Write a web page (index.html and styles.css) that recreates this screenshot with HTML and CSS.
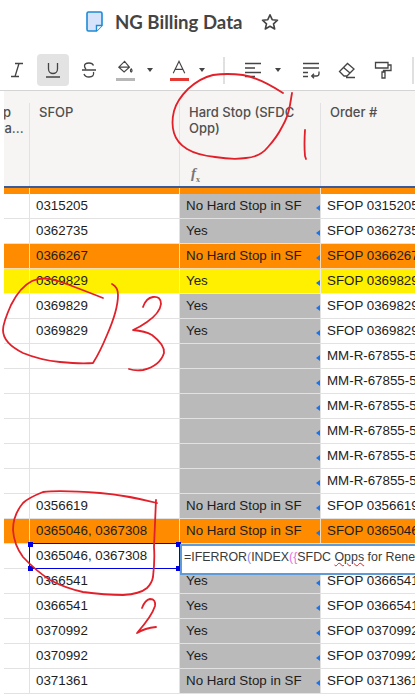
FILE: index.html
```html
<!DOCTYPE html>
<html lang="en">
<head>
  <meta charset="UTF-8" />
  <meta name="viewport" content="width=device-width, initial-scale=1.0">
  <title>NG Billing Data</title>
  <link rel="stylesheet" href="styles.css">
</head>
<body>

  <div class="titlebar">
    <svg class="doc-icon" width="17" height="21" viewBox="0 0 17 21">
      <path d="M1 2.5 a1.5 1.5 0 0 1 1.5-1.5 H14.5 a1.5 1.5 0 0 1 1.5 1.5 V14.5 L10.5 20 H2.5 a1.5 1.5 0 0 1-1.5-1.5 Z" fill="#d6e3fa" stroke="#1c8ad6" stroke-width="1.6"/>
      <path d="M10.5 20 V14.5 H16" fill="#fff" stroke="#1c8ad6" stroke-width="1.4"/>
    </svg>
    <h1 class="title">NG Billing Data</h1>
    <svg class="star" width="18" height="18" viewBox="0 0 18 18">
      <path d="M9 1.8 L11.2 6.7 L16.5 7.2 L12.5 10.8 L13.7 16 L9 13.3 L4.3 16 L5.5 10.8 L1.5 7.2 L6.8 6.7 Z" fill="none" stroke="#444" stroke-width="1.6" stroke-linejoin="round"/>
    </svg>
  </div>

  <div class="toolbar">
    <span class="tool"><svg viewBox="0 0 18 18"><path d="M7 2.5 H15 M3 15.5 H11 M11 2.5 L7 15.5"/></svg></span>
    <span class="tool active"><svg viewBox="0 0 18 18"><path d="M4.5 2 V8 a4.5 4.5 0 0 0 9 0 V2 M2 16 H16"/></svg></span>
    <span class="tool"><svg viewBox="0 0 18 18"><path d="M13.5 4.5 Q12.5 2 9 2 Q4.5 2 4.5 5 Q4.5 6.8 6 8 M2 9 H16 M13.5 11 Q14.5 16 9 16 Q5 16 4 13"/></svg></span>
    <span class="tool color-tool">
      <svg viewBox="0 0 18 18"><path d="M8.5 1.5 L2 8 L8 13.5 L14 8 Z M2.5 8 H14 M16 10 Q17.8 12.2 16 13.6 Q14.2 12.2 16 10 Z"/></svg>
      <i class="swatch swatch-grey"></i>
    </span>
    <span class="caret"></span>
    <span class="tool color-tool text-color">
      <svg viewBox="0 0 18 18"><path d="M2.5 15 L9 1.5 L15.5 15 M5 10.5 H13"/></svg>
      <i class="swatch swatch-red"></i>
    </span>
    <span class="caret"></span>
    <span class="divider first-divider"></span>
    <span class="tool"><svg viewBox="0 0 18 18"><path d="M1 2.5 H17 M1 7 H11 M1 11.5 H17 M1 15.5 H11"/></svg></span>
    <span class="caret caret-tight"></span>
    <span class="tool wrap-tool"><svg viewBox="0 0 18 18"><path d="M1 2.5 H17 M1 7 H17 M1 11.5 H6 M1 15.5 H6 M17 10.5 V12.5 a2.5 2.5 0 0 1-2.5 2.5 H10 M12 12.8 L9.7 15 L12 17.2"/></svg></span>
    <span class="tool"><svg viewBox="0 0 18 18"><path d="M1.5 10.5 L9.5 2.5 L16 8 L9 15 H6 Z M5.5 6.5 L12 12 M8 16.5 H17"/></svg></span>
    <span class="tool"><svg viewBox="0 0 18 18"><path d="M1.5 1.5 H14 V7 H1.5 Z M14 4 H17 V9.5 H9.5 V11 M8 11 H11 V17 H8 Z"/></svg></span>
    <span class="divider"></span>
  </div>

  <div class="sheet">
    <div class="head-row">
      <div class="head-cell clipped"><span class="clip-p">Op</span><span class="clip-a">Da...</span></div>
      <div class="head-cell">SFOP</div>
      <div class="head-cell">Hard Stop (SFDC Opp)<span class="fx"><i>f</i><sub>x</sub></span></div>
      <div class="head-cell">Order #</div>
    </div>
    <div class="band"><span></span><span></span><span></span><span></span></div>

    <div class="row"><div></div><div>0315205</div><div class="hard">No Hard Stop in SF</div><div>SFOP 0315205</div></div>
    <div class="row"><div></div><div>0362735</div><div class="hard">Yes</div><div>SFOP 0362735</div></div>
    <div class="row orange"><div></div><div>0366267</div><div class="hard">No Hard Stop in SF</div><div>SFOP 0366267</div></div>
    <div class="row yellow"><div></div><div>0369829</div><div class="hard">Yes</div><div>SFOP 0369829</div></div>
    <div class="row"><div></div><div>0369829</div><div class="hard">Yes</div><div>SFOP 0369829</div></div>
    <div class="row"><div></div><div>0369829</div><div class="hard">Yes</div><div>SFOP 0369829</div></div>
    <div class="row"><div></div><div></div><div class="hard"></div><div>MM-R-67855-5</div></div>
    <div class="row"><div></div><div></div><div class="hard"></div><div>MM-R-67855-5</div></div>
    <div class="row"><div></div><div></div><div class="hard"></div><div>MM-R-67855-5</div></div>
    <div class="row"><div></div><div></div><div class="hard"></div><div>MM-R-67855-5</div></div>
    <div class="row"><div></div><div></div><div class="hard"></div><div>MM-R-67855-5</div></div>
    <div class="row"><div></div><div></div><div class="hard"></div><div>MM-R-67855-5</div></div>
    <div class="row"><div></div><div>0356619</div><div class="hard">No Hard Stop in SF</div><div>SFOP 0356619</div></div>
    <div class="row orange"><div></div><div>0365046, 0367308</div><div class="hard">No Hard Stop in SF</div><div>SFOP 0365046</div></div>
    <div class="row"><div></div><div class="selected">0365046, 0367308<i class="handle tl"></i><i class="handle tr"></i><i class="handle bl"></i><i class="handle br"></i></div><div class="hard"></div><div></div>
      <div class="editor">=IFERROR<span class="paren-blue">(</span>INDEX<span class="paren-pink">(</span><span class="paren-pink">{</span>SFDC <span class="typo">Opps</span> for Renewals</div>
    </div>
    <div class="row"><div></div><div>0366541</div><div class="hard">Yes</div><div>SFOP 0366541</div></div>
    <div class="row"><div></div><div>0366541</div><div class="hard">Yes</div><div>SFOP 0366541</div></div>
    <div class="row"><div></div><div>0370992</div><div class="hard">Yes</div><div>SFOP 0370992</div></div>
    <div class="row"><div></div><div>0370992</div><div class="hard">Yes</div><div>SFOP 0370992</div></div>
    <div class="row"><div></div><div>0371361</div><div class="hard">No Hard Stop in SF</div><div>SFOP 0371361</div></div>
  </div>

  <!-- red pen marks drawn over the screenshot -->
  <svg class="ink" width="415" height="695" viewBox="0 0 415 695">
    <path d="M283 93 Q260 78 243 75 Q227 73 213 75 Q200 78 188 89 Q177 100 174 111 Q171 123 174 133 Q177 143 187 149 Q197 155 215 157 Q233 160 246 158 Q260 157 268 147 Q277 137 282 127 Q288 117 290 105 L292 93"/>
    <path d="M305 130 Q304 145 305 156 L306 159"/>
    <path d="M103 298 Q70 285 58 281 Q43 276 32 281 Q20 287 11 305 Q3 323 3 330 Q3 343 23 353 Q40 360 60 362 Q80 364 93 363 Q100 352 107 335 Q118 310 118 295 Q118 287 112 284"/>
    <path d="M143 307 Q146 298 153 297 Q161 296 161 304 Q160 313 147 322 Q140 327 133 330 Q145 331 152 335 Q165 345 164 353 Q160 366 143 370 Q135 371 129 369"/>
    <path d="M157 503 Q125 495 100 493 Q60 490 43 492 Q28 498 23 503 Q13 515 13 530 Q14 545 23 557 Q35 570 50 580 Q65 588 83 592 Q105 595 123 595 Q140 594 147 588 Q152 583 153 577 Q155 560 154 547 L156 500"/>
    <path d="M142 608 Q145 600 150 599 Q156 599 155 606 Q152 616 137 633 Q145 628 156 627"/>
  </svg>

</body>
</html>
```

FILE: styles.css
```css
html, body {
  margin: 0;
  padding: 0;
  background: white;
  overflow: hidden;
  width: 415px;
  height: 695px;
  font-family: 'Liberation Sans', Arial, sans-serif;
  color: #1d1d1d;
}

body { position: relative; }

/* title row */
.titlebar {
  height: 43px;
  display: flex;
  align-items: center;
  padding-left: 86px;
  box-sizing: border-box;
}

.doc-icon { margin-right: 12px; }

.title {
  margin: 0 18px 0 0;
  font-family: Lato, sans-serif;
  font-size: 18.6px;
  font-weight: 700;
  color: #444;
}

/* toolbar */
.toolbar {
  height: 48px;
  display: flex;
  align-items: center;
  gap: 4px;
  padding-top: 7px;
  box-sizing: border-box;
  border-bottom: 1px solid #d4d4d4;
}

.tool {
  width: 32px;
  height: 32px;
  border-radius: 4px;
  display: flex;
  flex-direction: column;
  align-items: center;
  justify-content: center;
  flex: none;
}

.tool:first-child { margin-left: 1px; }
.tool.active { background: #e3e3e3; }

.tool svg {
  width: 18px;
  height: 18px;
  fill: none;
  stroke: #444;
  stroke-width: 1.3;
}

.color-tool { justify-content: flex-start; padding-top: 6px; box-sizing: border-box; }
.color-tool svg { width: 16px; height: 16px; }
.text-color { margin-right: -2px; }

.swatch { display: block; width: 19px; height: 3px; margin-top: 2px; }
.swatch-grey { background: #b7b7b7; }
.swatch-red { background: #e53935; }

.caret {
  width: 0;
  height: 0;
  border-left: 3px solid transparent;
  border-right: 3px solid transparent;
  border-top: 4px solid #444;
  flex: none;
}

.color-tool + .caret { margin: 0 6px 0 2px; }
.caret-tight { margin: 0 6px 0 2px; }

.divider {
  width: 2px;
  height: 27px;
  background: #e0e0e0;
  flex: none;
}

.first-divider { margin: 0 8px 0 8px; }
.wrap-tool { margin-left: 4px; }
.toolbar .divider:last-child { margin-left: 9px; }

/* sheet */
.sheet { padding-left: 4px; }

.head-row, .row, .band {
  display: grid;
  grid-template-columns: 26px 150px 141px 1fr;
}

.head-row {
  height: 95px;
  background: #f6f5f4;
  padding-top: 12px;
  box-sizing: border-box;
}

.head-cell {
  position: relative;
  padding: 1px 24px 0 9px;
  font-family: Inter, sans-serif;
  font-size: 13px;
  font-weight: 500;
  line-height: 16px;
  color: #4f4f4f;
  border-right: 1px solid #e2e2e2;
  overflow: hidden;
}

.head-cell:last-child { border-right: 0; }

.clipped { padding: 1px 0 0 0; }
.clip-p { display: block; margin-left: -11px; }
.clip-a { display: block; margin-left: -9px; }

.fx {
  display: block;
  margin-top: 30px;
  margin-left: 2px;
  font-family: 'Liberation Serif', serif;
  font-size: 15px;
  font-weight: 700;
  line-height: 14px;
  color: #777;
}

.fx sub { font-size: 8px; line-height: 0; }

.band {
  height: 8px;
  box-sizing: border-box;
  background: #ff8c00;
  border-top: 2px solid #3d5a98;
}

.band span { border-right: 1px solid #f6e6d0; }
.band span:last-child { border-right: 0; }

.row { height: 25px; position: relative; }

.row > div {
  border-right: 1px solid #e2e2e2;
  border-bottom: 1px solid #e2e2e2;
  font-size: 13.33px;
  line-height: 24px;
  padding-left: 6px;
  white-space: nowrap;
  overflow: hidden;
  box-sizing: border-box;
  color: #1d1d1d;
}

.row > div:first-child { padding: 0; }
.row > div:last-child { border-right: 0; }

.row > .hard {
  background: #bababa;
  position: relative;
  overflow: visible;
}

.hard::after {
  content: "";
  position: absolute;
  right: 0;
  top: 11px;
  border-top: 3px solid transparent;
  border-bottom: 3px solid transparent;
  border-right: 4px solid #1a73e8;
}

.row.orange > div { background: #ff8c00; border-color: #f6dcb8; }
.row.yellow > div { background: #fff000; border-color: #eee; }

/* selected cell and its formula popup */
.row > .selected {
  position: relative;
  overflow: visible;
  border: 1px solid #0000e0;
  margin: -1px 0 0 -1px;
  padding-left: 6px;
  height: 26px;
  line-height: 24px;
  z-index: 2;
}

.handle {
  position: absolute;
  width: 5px;
  height: 5px;
  background: #0000e0;
}

.handle.tl { left: -2px; top: -2px; }
.handle.tr { right: -2px; top: -2px; }
.handle.bl { left: -2px; bottom: -3px; }
.handle.br { right: -2px; bottom: -3px; }

.row > .editor {
  position: absolute;
  left: 176px;
  top: 0;
  width: 240px;
  height: 31px;
  box-sizing: border-box;
  border: 2px solid #5e9bd8;
  border-right: 0;
  background: white;
  padding-left: 2px;
  font-size: 12.4px;
  line-height: 23px;
  color: #3a3a3a;
  z-index: 3;
}

.paren-blue { color: #8a8cf5; }
.paren-pink { color: #ee70e0; }
.typo { text-decoration: underline wavy #e02020 1px; }

/* pen marks */
.ink {
  position: absolute;
  top: 0;
  left: 0;
  pointer-events: none;
  z-index: 5;
  fill: none;
  stroke: #e2202a;
  stroke-width: 1.8;
  stroke-linecap: round;
  stroke-linejoin: round;
}
```
